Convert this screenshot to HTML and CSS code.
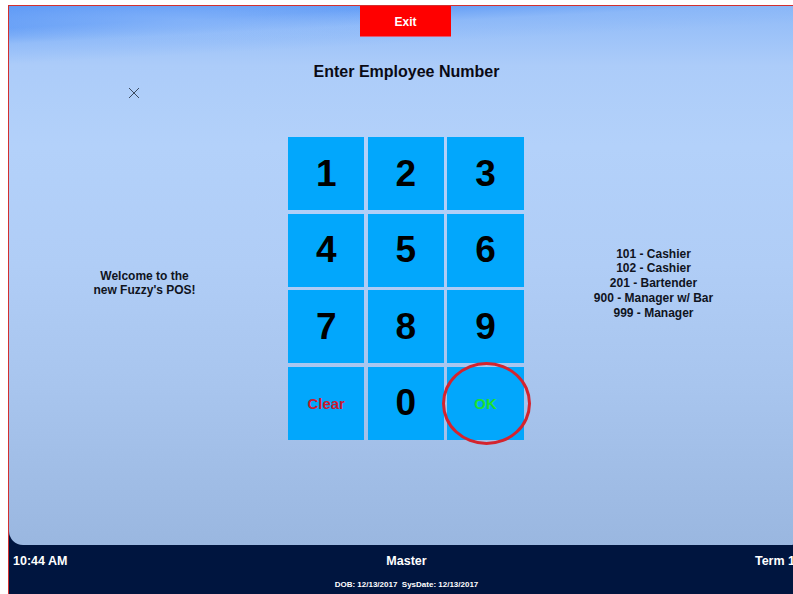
FILE: index.html
```html
<!DOCTYPE html>
<html lang="en">
<head>
<meta charset="utf-8">
<title>Fuzzy's POS - Login</title>
<link rel="stylesheet" href="styles.css">
</head>
<body>
<div class="window">
  <main class="main">
    <div class="exit-row">
      <button class="exit-btn">Exit</button>
    </div>
    <h1 class="title">Enter Employee Number</h1>
    <svg class="cursor-mark" width="12" height="12" viewBox="0 0 12 12">
      <path d="M1 1 L11 11 M11 1 L1 11" stroke="#3a4a60" stroke-width="1" fill="none"/>
    </svg>
    <section class="login">
      <p class="welcome">Welcome to the<br>new Fuzzy's POS!</p>
      <div class="keypad">
        <button class="key">1</button>
        <button class="key">2</button>
        <button class="key">3</button>
        <button class="key">4</button>
        <button class="key">5</button>
        <button class="key">6</button>
        <button class="key">7</button>
        <button class="key">8</button>
        <button class="key">9</button>
        <button class="key key-clear">Clear</button>
        <button class="key">0</button>
        <button class="key key-ok">OK</button>
        <span class="ok-ring"></span>
      </div>
      <ul class="roles">
        <li>101 - Cashier</li>
        <li>102 - Cashier</li>
        <li>201 - Bartender</li>
        <li>900 - Manager w/ Bar</li>
        <li>999 - Manager</li>
      </ul>
    </section>
  </main>
  <footer class="status">
    <div class="status-row">
      <span class="time">10:44 AM</span>
      <span class="user">Master</span>
      <span class="term">Term 1</span>
    </div>
    <div class="dates">DOB: 12/13/2017&nbsp; SysDate: 12/13/2017</div>
  </footer>
</div>
</body>
</html>
```

FILE: styles.css
```css
html, body {
  margin: 0;
  padding: 0;
  background: #ffffff;
  overflow: hidden;
  width: 793px;
  height: 594px;
}

body {
  font-family: "Liberation Sans", Arial, sans-serif;
}

.window {
  margin: 5px 0 0 8px;
  width: 795px;
  height: 588px;
  border-top: 1px solid #d23030;
  border-left: 1px solid #d23030;
  background: #00153f;
  display: flex;
  flex-direction: column;
}

/* main panel: sky-blue backdrop with a darker swoosh along the top edge */
.main {
  position: relative;
  height: 539px;
  flex: none;
  border-radius: 0 0 14px 14px;
  background:
    radial-gradient(ellipse 45% 6% at 22% 2.5%, rgba(160, 198, 252, 0.45), rgba(160, 198, 252, 0) 70%),
    linear-gradient(177deg, rgba(92, 152, 246, 1) 0px, rgba(96, 155, 246, 0.9) 22px, rgba(130, 178, 248, 0.45) 38px, rgba(170, 204, 250, 0) 58px),
    linear-gradient(to bottom, #8fbaf8 0px, #acccf9 60px, #b3d1fa 140px, #b0cdf6 260px, #a8c5ee 380px, #a0bde6 470px, #9ab7e0 539px);
  display: flex;
  flex-direction: column;
  align-items: center;
}

.exit-row {
  display: flex;
  justify-content: center;
  width: 100%;
}

.exit-btn {
  width: 91px;
  height: 31px;
  margin: 0 0 0 -2px;
  padding: 1px 0 0;
  border: none;
  border-bottom: 1px solid #e05a70;
  background: #ff0000;
  color: #ffffff;
  font: bold 12px "Liberation Sans", Arial, sans-serif;
}

.title {
  margin: 25px 0 0;
  font-size: 16px;
  line-height: 19px;
  font-weight: bold;
  color: #0a0a14;
}

.cursor-mark {
  position: absolute;
  left: 119px;
  top: 81px;
}

.login {
  margin-top: 56px;
  width: 100%;
  display: grid;
  grid-template-columns: 1fr 235px 1fr;
  align-items: center;
}

.welcome {
  margin: 0 9px 11px 0;
  text-align: center;
  font-size: 12px;
  line-height: 14px;
  font-weight: bold;
  color: #10141e;
}

.roles {
  list-style: none;
  margin: 0 21px 10px 0;
  padding: 0;
  text-align: center;
  font-size: 12px;
  line-height: 14.8px;
  font-weight: bold;
  color: #10141e;
}

.keypad {
  position: relative;
  margin-left: -1px;
  display: grid;
  grid-template-columns: repeat(3, 76.4px);
  grid-template-rows: repeat(4, 73.3px);
  gap: 3.3px;
}

.key {
  border: none;
  padding: 0;
  margin: 0;
  background: #02a7fc;
  color: #000000;
  font: bold 37px "Liberation Sans", Arial, sans-serif;
}

.key-clear,
.key-ok {
  font-size: 15px;
}

.key-clear {
  color: #cc1830;
}

.key-ok {
  color: #1fe030;
}

.ok-ring {
  position: absolute;
  left: 154px;
  top: 225px;
  width: 83px;
  height: 77px;
  border: 3px solid #d4242e;
  border-radius: 50%;
  pointer-events: none;
}

.status {
  flex: 1;
  color: #ffffff;
  font-weight: bold;
}

.status-row {
  display: grid;
  grid-template-columns: 1fr auto 1fr;
  padding: 9px 9px 0 9px;
  font-size: 12.5px;
  line-height: 14px;
}

.time {
  margin-left: -5px;
}

.term {
  text-align: right;
}

.dates {
  margin-top: 12px;
  text-align: center;
  font-size: 8px;
  line-height: 10px;
}
```
